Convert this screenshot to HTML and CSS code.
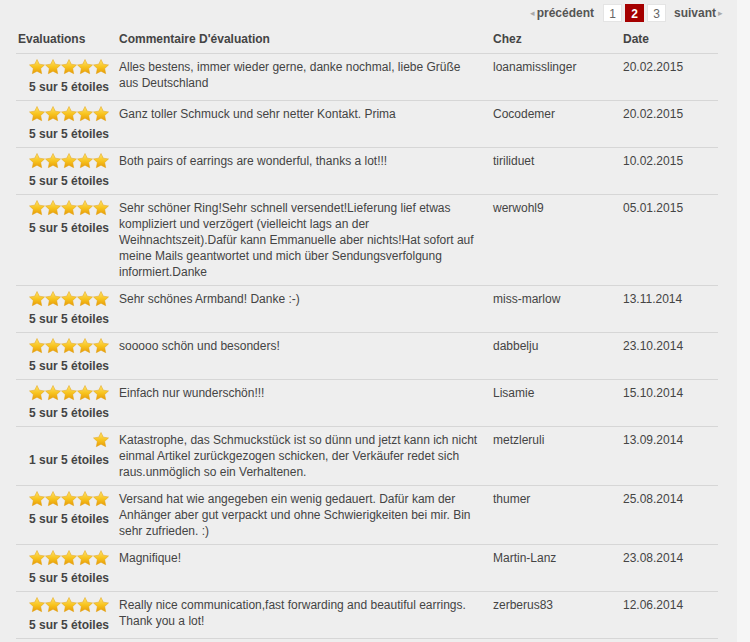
FILE: index.html
```html
<!DOCTYPE html>
<html lang="fr">
<head>
    <meta charset="UTF-8">
    <title>Evaluations</title>
    <link rel="stylesheet" href="styles.css">
</head>
<body>

<!-- Star sprite, used by every rating below -->
<svg class="sprite" width="0" height="0">
    <defs>
        <linearGradient id="gold" x1="0" y1="0" x2="0" y2="1">
            <stop offset="0" stop-color="#ffe36a"/>
            <stop offset="0.55" stop-color="#f7c21c"/>
            <stop offset="1" stop-color="#e69a0a"/>
        </linearGradient>
        <symbol id="star" viewBox="0 0 16 16">
            <path d="M8 0.5l2.3 4.7 5.2.7-3.8 3.6 1 5.2-4.7-2.5-4.7 2.5 1-5.2L0.5 5.9l5.2-.7z" fill="url(#gold)" stroke="#e2a317" stroke-width="0.5" stroke-linejoin="round"/>
        </symbol>
    </defs>
</svg>

<div class="panel">
    <div class="pager">
        <a href="#" class="prev"><span class="arrow">&#9666;</span>précédent</a>
        <a href="#" class="page">1</a>
        <span class="page current">2</span>
        <a href="#" class="page">3</a>
        <a href="#" class="next">suivant<span class="arrow">&#9656;</span></a>
    </div>

    <table class="reviews">
        <thead>
            <tr>
                <th class="col-rating">Evaluations</th>
                <th class="col-comment">Commentaire D'évaluation</th>
                <th class="col-user">Chez</th>
                <th class="col-date">Date</th>
            </tr>
        </thead>
        <tbody id="review-rows"></tbody>
    </table>
</div>

<script>
    // Review data for page 2
    const reviews = [
        [5, 'Alles bestens, immer wieder gerne, danke nochmal, liebe Grüße aus Deutschland', 'loanamisslinger', '20.02.2015'],
        [5, 'Ganz toller Schmuck und sehr netter Kontakt. Prima', 'Cocodemer', '20.02.2015'],
        [5, 'Both pairs of earrings are wonderful, thanks a lot!!!', 'tiriliduet', '10.02.2015'],
        [5, 'Sehr schöner Ring!Sehr schnell versendet!Lieferung lief etwas kompliziert und verzögert (vielleicht lags an der Weihnachtszeit).Dafür kann Emmanuelle aber nichts!Hat sofort auf meine Mails geantwortet und mich über Sendungsverfolgung informiert.Danke', 'werwohl9', '05.01.2015'],
        [5, 'Sehr schönes Armband! Danke :-)', 'miss-marlow', '13.11.2014'],
        [5, 'sooooo schön und besonders!', 'dabbelju', '23.10.2014'],
        [5, 'Einfach nur wunderschön!!!', 'Lisamie', '15.10.2014'],
        [1, 'Katastrophe, das Schmuckstück ist so dünn und jetzt kann ich nicht einmal Artikel zurückgezogen schicken, der Verkäufer redet sich raus.unmöglich so ein Verhaltenen.', 'metzleruli', '13.09.2014'],
        [5, 'Versand hat wie angegeben ein wenig gedauert. Dafür kam der Anhänger aber gut verpackt und ohne Schwierigkeiten bei mir. Bin sehr zufrieden. :)', 'thumer', '25.08.2014'],
        [5, 'Magnifique!', 'Martin-Lanz', '23.08.2014'],
        [5, 'Really nice communication,fast forwarding and beautiful earrings. Thank you a lot!', 'zerberus83', '12.06.2014']
    ];

    function starIcons(count) {
        let html = '';
        for (let i = 0; i < count; i++) {
            html += '<svg class="star"><use href="#star"/></svg>';
        }
        return html;
    }

    const body = document.getElementById('review-rows');
    reviews.forEach(function (r) {
        const row = document.createElement('tr');
        row.innerHTML =
            '<td class="col-rating"><div class="stars">' + starIcons(r[0]) + '</div>' +
            '<span class="rating-text">' + r[0] + ' sur 5 étoiles</span></td>' +
            '<td class="col-comment">' + r[1] + '</td>' +
            '<td class="col-user">' + r[2] + '</td>' +
            '<td class="col-date">' + r[3] + '</td>';
        body.appendChild(row);
    });
</script>

</body>
</html>
```

FILE: styles.css
```css
body {
    margin: 0;
    padding: 0;
    font-family: "Liberation Sans", Arial, sans-serif;
    font-size: 12px;
    line-height: 16px;
    color: #444;
    background-color: #f6f6f6;
}

.sprite {
    position: absolute;
    width: 0;
    height: 0;
}

.panel {
    width: 737px;
    min-height: 642px;
    background-color: #eeeeee;
    padding-top: 4px;
    box-sizing: border-box;
}

/* Pagination */
.pager {
    display: flex;
    align-items: center;
    justify-content: flex-end;
    padding-right: 14px;
    height: 18px;
}

.pager a {
    text-decoration: none;
}

.prev, .next {
    font-weight: bold;
    color: #555;
    display: flex;
    align-items: center;
}

.prev {
    margin-right: 6px;
}

.next {
    margin-left: 8px;
}

.arrow {
    color: #aaa;
    font-size: 9px;
    font-weight: normal;
}

.prev .arrow {
    margin-right: 2px;
}

.next .arrow {
    margin-left: 2px;
}

.page {
    display: block;
    width: 19px;
    height: 18px;
    line-height: 18px;
    text-align: center;
    background-color: #fff;
    border: 1px solid #e4e4e4;
    box-sizing: border-box;
    color: #666;
    margin-left: 3px;
}

.page.current {
    width: 19px;
    background-color: #a50000;
    border-color: #a50000;
    color: #fff;
    font-weight: bold;
}

/* Reviews table */
.reviews {
    border-collapse: collapse;
    table-layout: fixed;
    width: 702px;
    margin: 4px 0 0 16px;
}

.reviews th,
.reviews td {
    box-sizing: border-box;
    text-align: left;
    vertical-align: top;
    padding: 5px 6px 5px 6px;
    border-bottom: 1px solid #d6d6d6;
}

.reviews th {
    font-weight: bold;
    color: #444;
    padding-top: 5px;
    padding-bottom: 6px;
}

.reviews .col-rating {
    width: 97px;
    padding-left: 2px;
    padding-right: 4px;
}

.reviews td.col-rating {
    text-align: right;
}

.reviews .col-comment {
    width: 374px;
}

.reviews .col-user {
    width: 130px;
}

.reviews .col-date {
    width: 101px;
}

.stars {
    height: 20px;
    white-space: nowrap;
}

.star {
    width: 16px;
    height: 16px;
    vertical-align: top;
}

.rating-text {
    font-weight: bold;
    white-space: nowrap;
}
```
